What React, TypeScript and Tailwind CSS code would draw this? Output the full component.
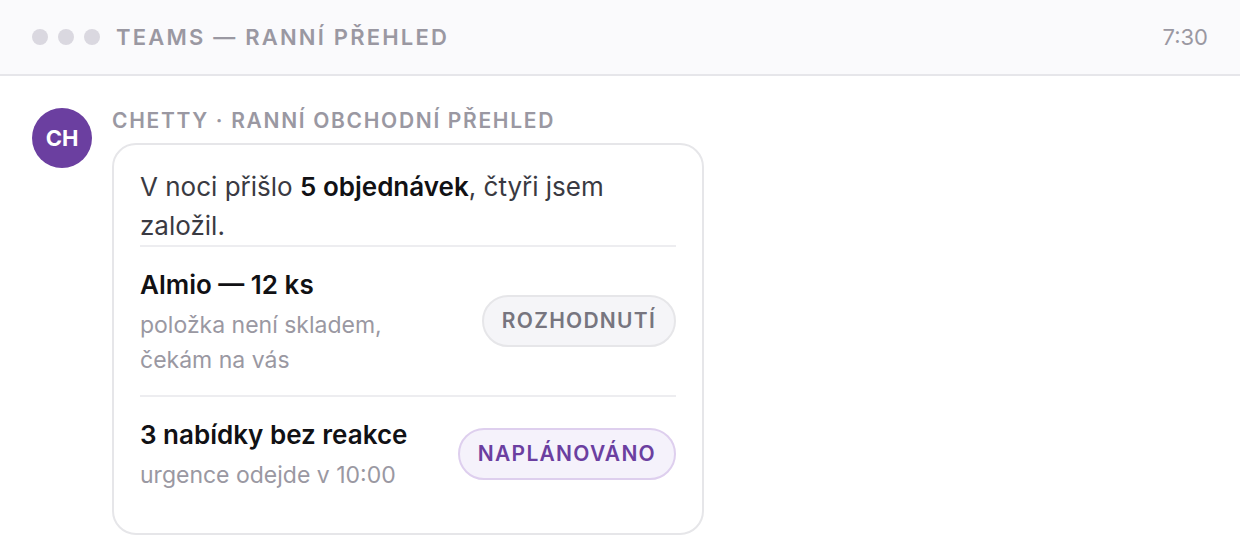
type BadgeTone = "neutral" | "accent"

type DigestItem = {
  title: string
  note: string
  badge: string
  tone: BadgeTone
}

const ITEMS: DigestItem[] = [
  {
    title: "Almio — 12 ks",
    note: "položka není skladem, čekám na vás",
    badge: "Rozhodnutí",
    tone: "neutral",
  },
  {
    title: "3 nabídky bez reakce",
    note: "urgence odejde v 10:00",
    badge: "Naplánováno",
    tone: "accent",
  },
]

const TONES: Record<BadgeTone, string> = {
  neutral: "border-[#e6e6e9] bg-[#f5f5f8] text-[#77757f]",
  accent: "border-[#decfee] bg-[#f5f2fb] text-[#6b3fa0]",
}

function WindowBar() {
  return (
    <header className="flex items-center gap-4 border-b-2 border-[#e6e6ea] bg-[#fafafc] px-8 py-5">
      <div className="flex gap-[10px]" aria-hidden="true">
        <span className="size-4 rounded-full bg-[#dad8e0]" />
        <span className="size-4 rounded-full bg-[#dad8e0]" />
        <span className="size-4 rounded-full bg-[#dad8e0]" />
      </div>
      <h1 className="text-[22px] leading-[34px] font-semibold tracking-widest text-[#9a98a2] uppercase">
        Teams — ranní přehled
      </h1>
      <time className="ml-auto text-[22px] leading-[34px] text-[#9a98a2]">7:30</time>
    </header>
  )
}

function DigestRow({ title, note, badge, tone }: DigestItem) {
  return (
    <li className="flex items-center justify-between gap-6 border-t-2 border-[#ededf0] py-[18px]">
      <div className="max-w-[280px]">
        <h3 className="text-[26px] leading-normal font-semibold text-[#111114]">{title}</h3>
        <p className="mt-1 text-[23px] leading-normal text-[#9a98a2]">{note}</p>
      </div>
      <span
        className={`shrink-0 rounded-full border-2 px-[18px] py-2 text-[21px] leading-8 font-semibold tracking-[0.06em] uppercase ${TONES[tone]}`}
      >
        {badge}
      </span>
    </li>
  )
}

export default function App() {
  return (
    <div className="min-h-screen bg-white font-['Inter','Liberation_Sans',sans-serif]">
      <WindowBar />
      <main className="flex items-start gap-5 px-8 pt-8 pb-6">
        <div className="flex size-[60px] shrink-0 items-center justify-center rounded-full bg-[#6b3fa0] text-[22px] font-bold text-white">
          CH
        </div>
        <section className="w-full max-w-[592px]">
          <h2 className="mb-[10px] text-[21px] leading-[25px] font-semibold tracking-[0.08em] whitespace-nowrap text-[#9a98a2] uppercase">
            Chetty · ranní obchodní přehled
          </h2>
          <div className="rounded-3xl border-2 border-[#e6e6e9] bg-white px-[26px] py-[22px]">
            <p className="text-[26px] leading-normal text-[#3a3a42]">
              V noci přišlo <strong className="font-semibold text-[#111114]">5 objednávek</strong>, čtyři jsem založil.
            </p>
            <ul>
              {ITEMS.map((item) => (
                <DigestRow key={item.title} {...item} />
              ))}
            </ul>
          </div>
        </section>
      </main>
    </div>
  )
}
